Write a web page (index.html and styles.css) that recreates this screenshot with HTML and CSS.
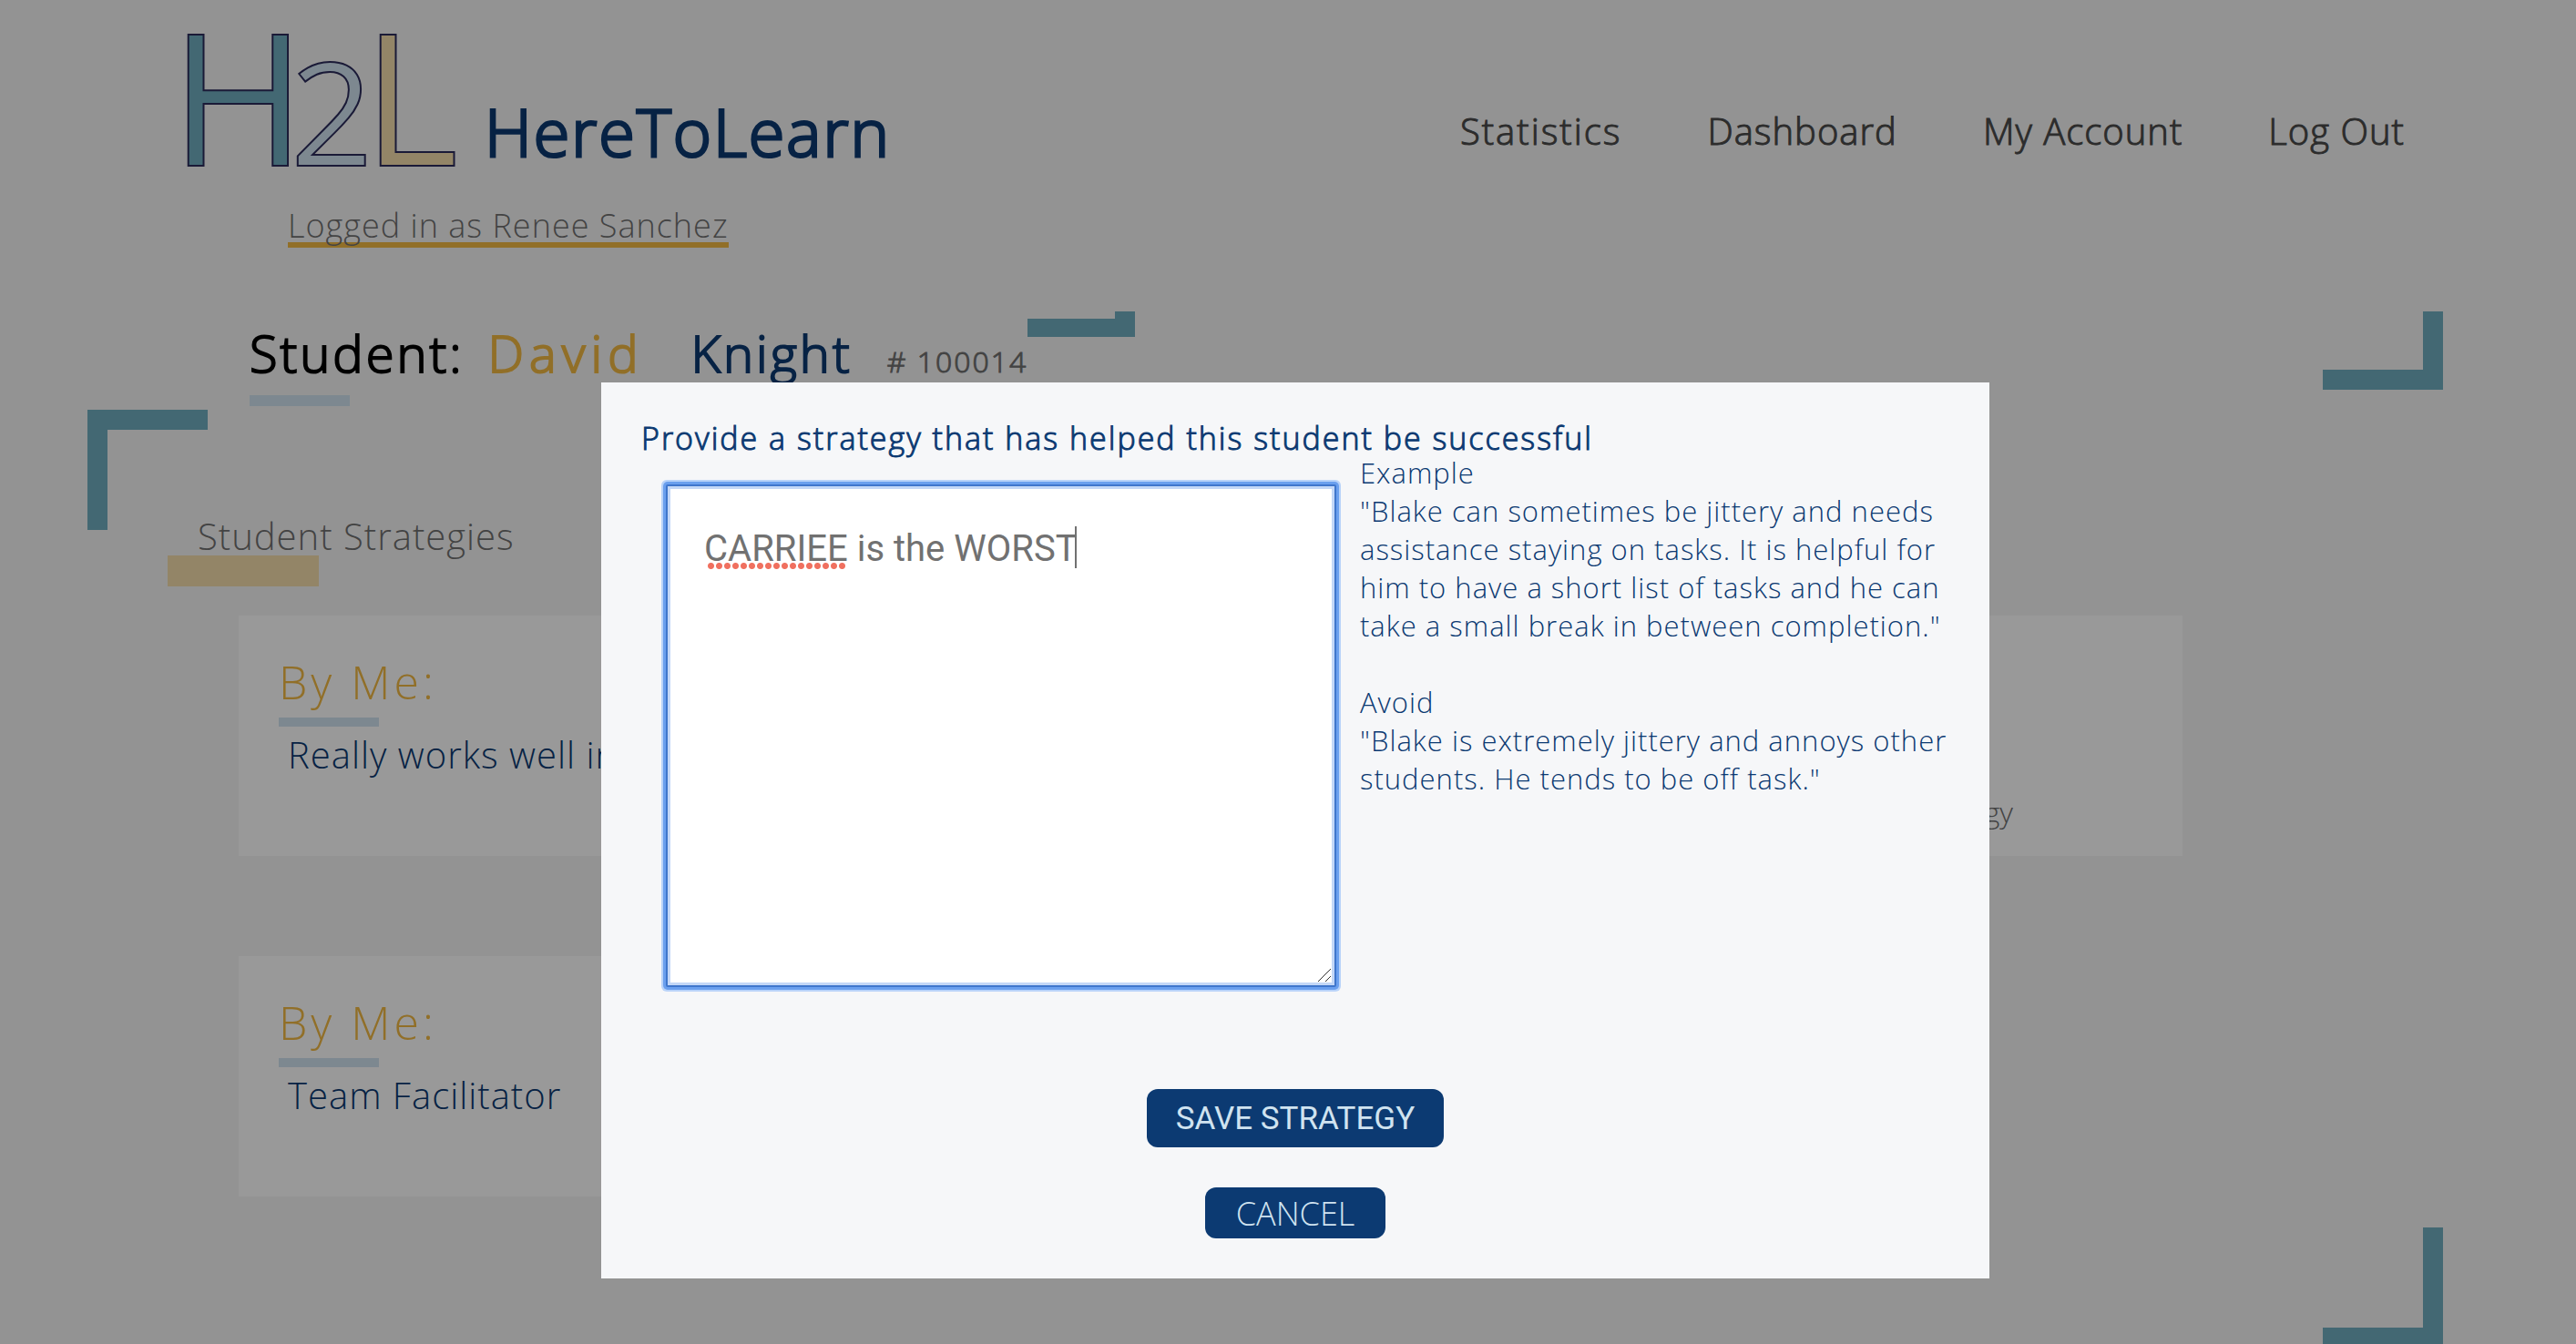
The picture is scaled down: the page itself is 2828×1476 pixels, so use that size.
FILE: index.html
```html
<!DOCTYPE html>
<html lang="en">
<head>
<meta charset="utf-8">
<title>HereToLearn</title>
<link rel="stylesheet" href="styles.css">
</head>
<body>
<header class="topbar">
  <a class="brand" href="#">
    <svg class="logo" viewBox="0 0 300 154" role="img" aria-label="H2L">
      <text class="logo-h" x="-19" y="150">H</text>
      <text class="logo-2" x="113" y="150">2</text>
      <text class="logo-l" x="192" y="150">L</text>
    </svg>
    <span class="brand-name">HereToLearn</span>
  </a>
  <nav class="nav">
    <a class="spaced" href="#">Statistics</a>
    <a href="#">Dashboard</a>
    <a href="#">My Account</a>
    <a href="#">Log Out</a>
  </nav>
</header>

<main>
  <p class="session">Logged in as Renee Sanchez</p>

  <section class="student">
    <span class="corner corner-end"></span>
    <div class="student-name">
      <span class="corner corner-name"></span>
      <h1>Student:</h1>
      <span class="first">David</span>
      <span class="last">Knight</span>
      <span class="number"># 100014</span>
    </div>
    <div class="rule"></div>
  </section>

  <section class="strategies">
    <h2>Student Strategies</h2>
    <div class="highlight"></div>
    <div class="cards">
      <article class="card">
        <h3>By Me:</h3>
        <div class="rule"></div>
        <p>Really works well in groups</p>
      </article>
      <article class="card card-add">
        <a href="#">Add Strategy</a>
      </article>
      <article class="card">
        <h3>By Me:</h3>
        <div class="rule"></div>
        <p>Team Facilitator</p>
      </article>
    </div>
  </section>
</main>

<div class="overlay">
  <form class="modal" role="dialog" aria-modal="true">
    <label class="modal-title" for="strategy">Provide a strategy that has helped this student be successful</label>
    <div class="modal-body">
      <div class="editor">
        <textarea id="strategy" spellcheck="false">CARRIEE is the WORST</textarea>
        <span class="misspelled"></span>
        <span class="caret"></span>
        <svg class="grip" viewBox="0 0 16 16"><path d="M1 15 15 1M9 15l6-6"/></svg>
      </div>
      <div class="hints">
        <p>Example</p>
        <p>"Blake can sometimes be jittery and needs assistance staying on tasks. It is helpful for him to have a short list of tasks and he can take a small break in between completion."</p>
        <p class="avoid">Avoid</p>
        <p>"Blake is extremely jittery and annoys other students. He tends to be off task."</p>
      </div>
    </div>
    <div class="actions">
      <button class="save" type="submit">SAVE STRATEGY</button>
      <button class="cancel" type="button">CANCEL</button>
    </div>
  </form>
</div>
</body>
</html>
```
FILE: styles.css
```css
:root {
  --navy: #0c3a72;
  --teal: #70adc0;
  --gold: #f2b943;
  --sand: #f5deac;
  --sky: #d0e3f0;
  --page: #f6f6f6;
  --panel: #f6f7f9;
  --grey: #717171;
}

*, *::before, *::after { box-sizing: border-box; }

body {
  margin: 0;
  overflow: hidden;
  background: var(--page);
  color: var(--grey);
  font-family: "Open Sans", "Noto Sans", sans-serif;
  font-weight: 300;
}

h1, h2, h3, p { margin: 0; font-weight: inherit; }
a { color: inherit; text-decoration: none; }

/* Header */
.topbar {
  display: flex;
  justify-content: space-between;
  align-items: flex-end;
  padding: 32px 188px 0 206px;
}
.brand { display: flex; align-items: flex-end; gap: 26px; }
.logo {
  display: block;
  width: 300px;
  height: 154px;
  overflow: visible;
  stroke: #2c2c5c;
  stroke-width: 2px;
}
.logo-h, .logo-l { font-size: 202px; font-weight: 400; }
.logo-2 { font-size: 158px; font-weight: 400; fill: var(--sky); }
.logo-h { fill: var(--teal); }
.logo-l { fill: var(--sand); }
.brand-name {
  color: var(--navy);
  font-size: 72px;
  line-height: 84px;
  letter-spacing: 2px;
  -webkit-text-stroke: 3px currentColor;
}
.nav {
  display: flex;
  gap: 94px;
  color: #4a4a4a;
  font-size: 40px;
  line-height: 84px;
  letter-spacing: 1px;
  -webkit-text-stroke: 1px currentColor;
}
.spaced { letter-spacing: 2px; }

.session {
  width: fit-content;
  margin: 44px 0 0 316px;
  border-bottom: 6px solid var(--gold);
  font-size: 36px;
  line-height: 36px;
  letter-spacing: 1px;
}

/* Student heading */
.student {
  position: relative;
  margin: 70px 146px 0 274px;
  padding-top: 13px;
}
.student-name {
  display: flex;
  align-items: baseline;
  width: fit-content;
  font-size: 56px;
  line-height: 64px;
  letter-spacing: 3px;
  -webkit-text-stroke: 2px currentColor;
}
.student-name h1 { color: #000; font-size: inherit; }
.first { margin-left: 26px; color: var(--gold); letter-spacing: 6px; }
.last { margin-left: 52px; color: var(--navy); }
.number {
  margin-left: 38px;
  font-size: 32px;
  line-height: 32px;
  letter-spacing: 2px;
  -webkit-text-stroke-width: 1px;
}
.rule { width: 110px; height: 10px; background: var(--sky); }
.student .rule { height: 12px; margin-top: 15px; }

.corner, .strategies::before, .strategies::after {
  content: "";
  position: absolute;
  width: 132px;
  height: 132px;
  border: 0 solid var(--teal);
}
.corner { top: 0; border-width: 0 22px 22px 0; }
.corner-end { right: 0; height: 86px; }
.corner-name { left: 854px; width: 118px; height: 28px; border-bottom-width: 20px; }

/* Strategy list */
.strategies {
  position: relative;
  margin: 4px 146px 0 96px;
  padding: 111px 286px 166px 166px;
}
.strategies::before { top: 0; left: 0; border-width: 22px 0 0 22px; }
.strategies::after { right: 0; bottom: 0; border-width: 0 22px 22px 0; }
.strategies h2 {
  margin-left: -45px;
  font-size: 40px;
  line-height: 56px;
  letter-spacing: 1px;
}
.highlight {
  width: 166px;
  height: 34px;
  margin: -7px 0 32px -78px;
  background: var(--sand);
}
.cards {
  display: grid;
  grid-template-columns: 1fr 1fr;
  gap: 110px;
}
.card {
  min-height: 264px;
  padding: 41px 44px;
  background: #fff;
}
.card h3 {
  color: var(--gold);
  font-size: 50px;
  line-height: 64px;
  letter-spacing: 4px;
}
.card .rule { margin: 7px 0 3px; }
.card p {
  margin-left: 10px;
  color: var(--navy);
  font-size: 40px;
  line-height: 56px;
  letter-spacing: 1px;
}
.card-add {
  display: flex;
  justify-content: flex-end;
  align-items: flex-end;
  padding: 26px 186px 26px 44px;
  font-size: 32px;
  line-height: 44px;
}

/* Dialog */
.overlay {
  position: fixed;
  inset: 0;
  display: flex;
  justify-content: center;
  align-items: flex-start;
  padding: 420px 0 0 16px;
  background: rgba(0, 0, 0, .4);
}
.modal {
  width: 1524px;
  max-width: 90%;
  padding: 44px 40px;
  background: var(--panel);
  color: var(--navy);
}
.modal-title {
  display: block;
  margin-left: 4px;
  font-size: 34px;
  line-height: 34px;
  letter-spacing: 2px;
  -webkit-text-stroke: 1px currentColor;
}
.modal-body {
  display: grid;
  grid-template-columns: 736px 1fr;
  gap: 26px;
  padding-left: 31px;
}
.editor { position: relative; margin-top: 34px; }
.editor textarea {
  display: block;
  width: 100%;
  height: 552px;
  padding: 45px 40px;
  border: 2px solid #3f76cc;
  border-radius: 2px;
  outline: 0;
  box-shadow: 0 0 0 3px #6a9fee, 0 0 0 5px #b9d3f9, inset 0 0 0 3px #c3d7f7;
  background: #fff;
  color: var(--grey);
  font: 400 40px/48px Roboto, "Liberation Sans", sans-serif;
  resize: none;
}
.misspelled {
  position: absolute;
  top: 86px;
  left: 45px;
  width: 153px;
  height: 7px;
  background: radial-gradient(circle, #f0705f 3px, transparent 4px) 0 0 / 9px 7px;
}
.caret {
  position: absolute;
  top: 46px;
  left: 449px;
  width: 2px;
  height: 46px;
  background: var(--grey);
}
.grip {
  position: absolute;
  right: 5px;
  bottom: 5px;
  width: 16px;
  height: 16px;
  fill: none;
  stroke: #333;
  stroke-width: 1px;
}
.hints { font-size: 31px; line-height: 42px; letter-spacing: 1px; }
.avoid { margin-top: 42px; }

.actions {
  display: flex;
  flex-direction: column;
  align-items: center;
  gap: 44px;
  margin-top: 112px;
}
.actions button {
  border: 0;
  border-radius: 12px;
  padding: 0 34px;
  background: var(--navy);
  color: var(--sky);
  font-size: 36px;
  font-weight: 300;
}
.actions .save {
  height: 64px;
  padding: 0 32px;
  font: 400 35px Roboto, "Liberation Sans", sans-serif;
}
.actions .cancel { height: 56px; font-family: "Open Sans", sans-serif; }
```
